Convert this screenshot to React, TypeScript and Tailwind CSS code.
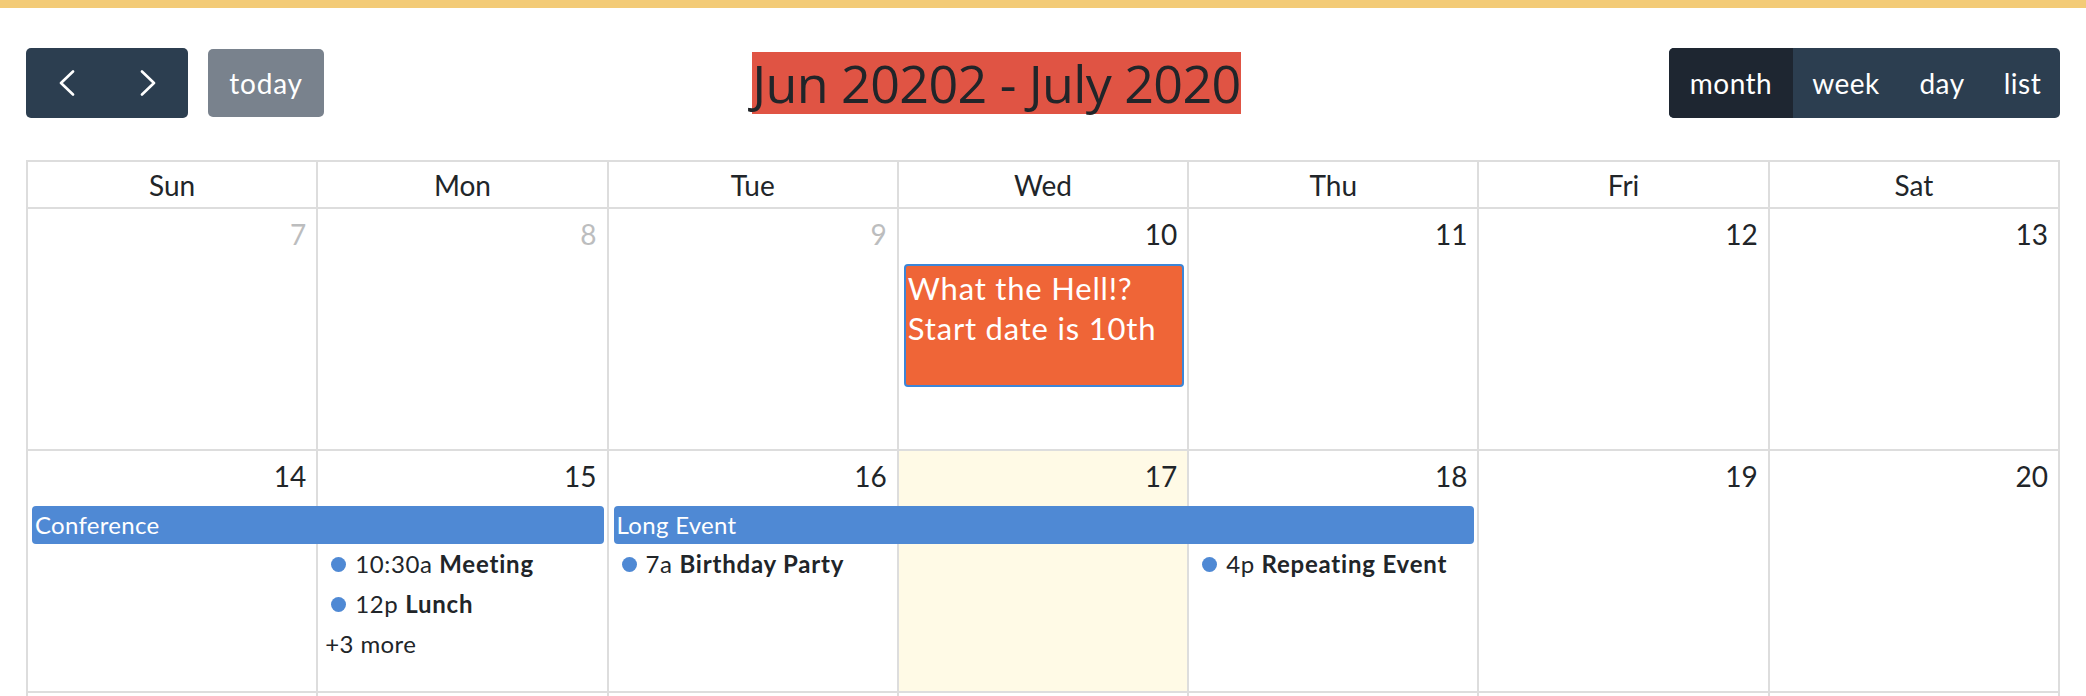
import React from 'react';

const colStart = ['col-start-1', 'col-start-2', 'col-start-3', 'col-start-4', 'col-start-5', 'col-start-6', 'col-start-7'];

interface Week {
    days: number[];
    muted?: number[];
    today?: number;
}

const weeks: Week[] = [
    { days: [7, 8, 9, 10, 11, 12, 13], muted: [0, 1, 2] },
    { days: [14, 15, 16, 17, 18, 19, 20], today: 3 },
];

function Chevron({ dir }: { dir: 'left' | 'right' }) {
    return (
        <svg width="16" height="26" viewBox="0 0 16 26" fill="none" stroke="white" strokeWidth="2.6" strokeLinecap="round" strokeLinejoin="round">
            {dir === 'left' ? <polyline points="14,1.5 2,13 14,24.5" /> : <polyline points="2,1.5 14,13 2,24.5" />}
        </svg>
    );
}

function TimedEvent({ time, title, className }: { time: string; title: string; className: string }) {
    return (
        <div className={`${className} flex items-center pl-[13px] gap-[9px] text-[24px] tracking-[0.6px] leading-[40px] text-[#212529] whitespace-nowrap z-10`}>
            <span className="w-[15px] h-[15px] rounded-full bg-[#4f89d4] shrink-0" />
            <span>
                {time} <b className="font-bold tracking-[0.8px]">{title}</b>
            </span>
        </div>
    );
}

function WeekRow({ week, children }: { week: Week; children?: React.ReactNode }) {
    return (
        <div className="grid grid-cols-7 grid-rows-[55px_38px_40px_40px_40px_1fr] h-[242px]">
            {week.days.map((d, i) => (
                <div
                    key={d}
                    className={`${colStart[i]} row-start-1 row-end-7 border-r-2 border-b-2 border-[#dddddd] ${week.today === i ? 'bg-[#fffae6]' : ''}`}
                >
                    <div className={`text-right pr-[10px] pt-1 text-[28px] leading-[42px] ${week.muted?.includes(i) ? 'text-[#bcbdbe]' : 'text-[#212529]'}`}>
                        {d}
                    </div>
                </div>
            ))}
            {children}
        </div>
    );
}

export default function App() {
    const heads = ['Sun', 'Mon', 'Tue', 'Wed', 'Thu', 'Fri', 'Sat'];
    return (
        <div className="min-h-screen bg-white font-['Lato',sans-serif] text-[#212529]">
            <div className="h-[8px] bg-[#f3cb77]" />
            <div className="px-[26px]">
                {/* Toolbar */}
                <div className="flex items-center justify-between pt-[40px] pb-[42px]">
                    <div className="flex items-center gap-[20px]">
                        <div className="flex h-[70px] rounded-[5px] bg-[#2c3e50] overflow-hidden">
                            <button className="w-[81px] flex items-center justify-center">
                                <Chevron dir="left" />
                            </button>
                            <button className="w-[81px] flex items-center justify-center">
                                <Chevron dir="right" />
                            </button>
                        </div>
                        <button className="h-[68px] w-[116px] rounded-[5px] bg-[#79828d] text-white text-[28px] tracking-[0.8px]">today</button>
                    </div>
                    <h2 className="bg-[#e05444] font-['Open_Sans',sans-serif] text-[52px] leading-[62px] tracking-[-0.6px] text-[#212529]">
                        Jun 20202 - July 2020
                    </h2>
                    <div className="flex h-[70px] rounded-[5px] bg-[#2c3e50] overflow-hidden text-white text-[28px] tracking-[0.5px]">
                        <button className="w-[124px] bg-[#1e2631]">month</button>
                        <button className="w-[106px]">week</button>
                        <button className="w-[86px]">day</button>
                        <button className="w-[75px]">list</button>
                    </div>
                </div>

                {/* Month grid */}
                <div className="border-l-2 border-t-2 border-[#dddddd]">
                    <div className="grid grid-cols-7">
                        {heads.map((h) => (
                            <div key={h} className="h-[47px] flex items-center justify-center border-r-2 border-b-2 border-[#dddddd] text-[28px]">
                                {h}
                            </div>
                        ))}
                    </div>

                    <WeekRow week={weeks[0]}>
                        <div className="col-start-4 row-start-2 row-span-4 self-start mx-[5px] h-[123px] rounded-[4px] border-2 border-[#3c86d8] bg-[#ef6537] px-[2px] pt-[2px] text-white text-[31px] tracking-[0.8px] leading-[40px] whitespace-nowrap z-10">
                            <div>What the Hell!?</div>
                            <div>Start date is 10th</div>
                        </div>
                    </WeekRow>

                    <WeekRow week={weeks[1]}>
                        <div className="col-start-1 col-span-2 row-start-2 ml-[4px] mr-[5px] rounded-[4px] bg-[#4f89d4] px-[3px] text-white text-[24px] tracking-[0.3px] leading-[38px] z-10">
                            Conference
                        </div>
                        <div className="col-start-3 col-span-3 row-start-2 mx-[5px] rounded-[4px] bg-[#4f89d4] px-[3px] text-white text-[24px] tracking-[0.3px] leading-[38px] z-10">
                            Long Event
                        </div>
                        <TimedEvent className="col-start-2 row-start-3" time="10:30a" title="Meeting" />
                        <TimedEvent className="col-start-2 row-start-4" time="12p" title="Lunch" />
                        <div className="col-start-2 row-start-5 pl-[7px] text-[24px] tracking-[0.4px] leading-[40px] text-[#212529] z-10">+3 more</div>
                        <TimedEvent className="col-start-3 row-start-3" time="7a" title="Birthday Party" />
                        <TimedEvent className="col-start-5 row-start-3" time="4p" title="Repeating Event" />
                    </WeekRow>

                    {/* next week, only its top edge is in view */}
                    <div className="grid grid-cols-7 h-[40px]">
                        {colStart.map((c) => (
                            <div key={c} className={`${c} border-r-2 border-[#dddddd]`} />
                        ))}
                    </div>
                </div>
            </div>
        </div>
    );
}
